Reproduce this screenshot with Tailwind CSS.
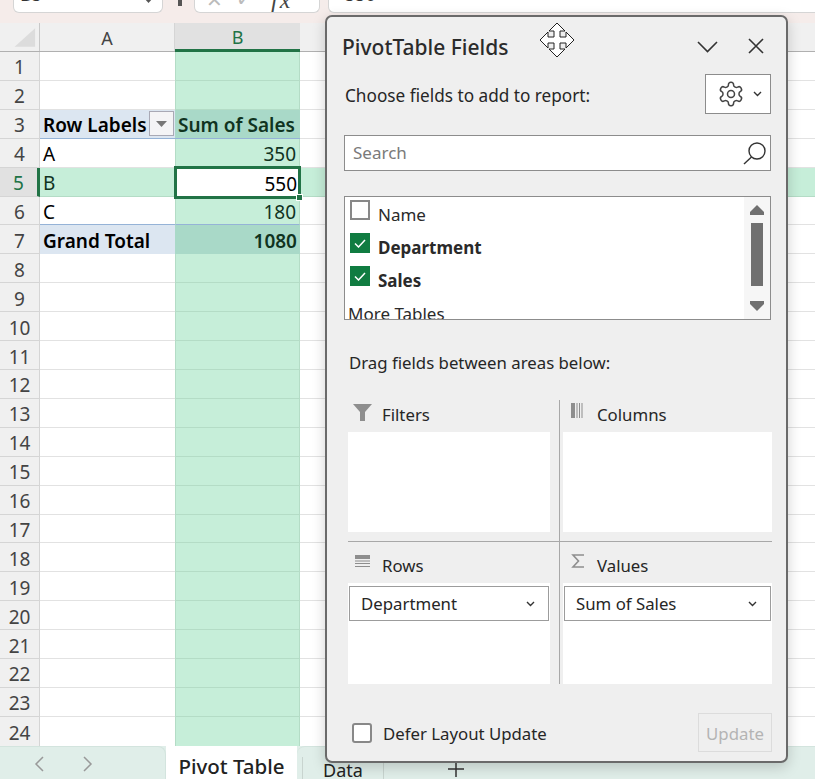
<!DOCTYPE html>
<html><head><meta charset="utf-8"><title>PivotTable Fields</title>
<script src="https://cdn.jsdelivr.net/npm/@tailwindcss/browser@4"></script>
</head>
<body class="m-0">
<div class="relative w-[815px] h-[779px] overflow-hidden bg-white font-['Noto_Sans',sans-serif] text-[#222]">
  <!-- formula bar -->
  <div class="h-[23px] bg-[#f5ecea] flex items-start text-[18px] text-[#333]">
    <div class="ml-[13px] w-[150px] h-[13px] bg-white border border-t-0 border-[#d5d5d5] rounded-b-[6px] overflow-hidden flex justify-between pl-[6px] pr-[9px]"><span class="leading-[20px] mt-[-16px]">B5</span><svg class="mt-[-2px]" width="9" height="5" viewBox="0 0 9 5"><polygon points="0,0 9,0 4.500,5" fill="#555"/></svg></div>
    <div class="ml-[15px] w-[4px] h-[6px] bg-[#555]"></div>
    <div class="ml-[12px] w-[126px] h-[13px] bg-white border border-t-0 border-[#d5d5d5] rounded-b-[6px] overflow-hidden flex items-end gap-[13px] pl-[11px] text-[#bbb] text-[20px]"><span class="leading-[14px] mb-[5px]">✕</span><span class="leading-[14px] mb-[6px]">✓</span><span class="italic font-['Liberation_Serif',serif] text-[#444] text-[24px] tracking-[2px] leading-[14px] ml-[5px] mb-[5px]">fx</span></div>
    <div class="ml-[8px] flex-1 h-[13px] bg-white border border-t-0 border-r-0 border-[#d5d5d5] rounded-bl-[6px] overflow-hidden pl-[16px]"><span class="block leading-[20px] mt-[-16px]">550</span></div>
  </div>
  <!-- column headers -->
  <div class="flex h-[29px] bg-[#f0f0f0] text-[18px] text-[#444] border-b border-[#b0b0b0]">
    <div class="w-10 border-r border-[#c8c8c8] flex items-center justify-center"><svg width="40" height="28" viewBox="0 0 40 28"><polygon points="15,24 36,24 36,5" fill="#dcdcdc"/></svg></div>
    <div class="w-[135px] flex items-center justify-center border-r border-[#d5d5d5] pt-[2px]">A</div>
    <div class="w-[125px] flex items-center justify-center bg-[#e1e1e1] text-[#217346] border-b-[3px] border-[#217346] mb-[-1px] pt-[2px]">B</div>
    <div class="flex-1"></div>
  </div>
  <!-- rows -->
  <div class="text-[19px] leading-none [&>div>div]:pt-[4px]">
    <div class="flex h-[28.92px]"><div class="w-10 bg-[#f0f0f0] border-r border-b border-[#d5d5d5] text-[#444] flex items-center justify-center">1</div><div class="w-[135px] border-b border-[#e2e2e2]"></div><div class="w-[125px] bg-[#c6eed9] border-x border-b border-[#b4dcc6]"></div><div class="flex-1 border-b border-[#e2e2e2]"></div></div>
    <div class="flex h-[28.92px]"><div class="w-10 bg-[#f0f0f0] border-r border-b border-[#d5d5d5] text-[#444] flex items-center justify-center">2</div><div class="w-[135px] border-b border-[#e2e2e2]"></div><div class="w-[125px] bg-[#c6eed9] border-x border-b border-[#b4dcc6]"></div><div class="flex-1 border-b border-[#e2e2e2]"></div></div>
    <div class="flex h-[28.92px]"><div class="w-10 bg-[#f0f0f0] border-r border-b border-[#d5d5d5] text-[#444] flex items-center justify-center">3</div><div class="w-[135px] bg-[#dce6f1] border-b border-[#95b3d7] flex items-center justify-between pl-[3px] pr-px font-semibold text-black"><span>Row Labels</span><span class="w-[25px] h-[25px] mt-[-4px] bg-[#f4f4f6] border border-[#a9a9b5] flex items-center justify-center"><svg width="11" height="6" viewBox="0 0 11 6"><polygon points="0,0 11,0 5.5,6" fill="#777"/></svg></span></div><div class="w-[125px] bg-[#a9d9c8] border-b border-[#95b3d7] flex items-center pl-[3px] font-semibold text-[#10331f] whitespace-nowrap">Sum of Sales</div><div class="flex-1 border-b border-[#e2e2e2]"></div></div>
    <div class="flex h-[28.92px]"><div class="w-10 bg-[#f0f0f0] border-r border-b border-[#d5d5d5] text-[#444] flex items-center justify-center">4</div><div class="w-[135px] border-b border-[#e2e2e2] flex items-center pl-[3px] text-black">A</div><div class="w-[125px] bg-[#c6eed9] border-x border-b border-[#b4dcc6] flex items-center justify-end pr-[3px] text-[#10331f]">350</div><div class="flex-1 border-b border-[#e2e2e2]"></div></div>
    <div class="flex h-[28.92px]"><div class="w-10 bg-[#e1e1e1] border-r-[3px] border-b border-r-[#217346] border-b-[#d5d5d5] text-[#217346] flex items-center justify-center">5</div><div class="w-[135px] bg-[#c6eed9] border-b border-[#b4dcc6] flex items-center pl-[3px] text-[#10331f]">B</div><div class="relative w-[125px] bg-white flex items-center justify-end pr-[3px] text-black">550<span class="absolute -inset-x-px inset-y-[-2px] border-[3px] border-[#217346]"></span><span class="absolute right-[-3px] bottom-[-4px] w-[7px] h-[7px] bg-[#217346] border border-white"></span></div><div class="flex-1 bg-[#c6eed9] border-b border-[#b4dcc6]"></div></div>
    <div class="flex h-[28.92px]"><div class="w-10 bg-[#f0f0f0] border-r border-b border-[#d5d5d5] text-[#444] flex items-center justify-center">6</div><div class="w-[135px] border-b border-[#95b3d7] flex items-center pl-[3px] text-black">C</div><div class="w-[125px] bg-[#c6eed9] border-x border-b border-x-[#b4dcc6] border-b-[#95b3d7] flex items-center justify-end pr-[3px] text-[#10331f]">180</div><div class="flex-1 border-b border-[#e2e2e2]"></div></div>
    <div class="flex h-[28.92px]"><div class="w-10 bg-[#f0f0f0] border-r border-b border-[#d5d5d5] text-[#444] flex items-center justify-center">7</div><div class="w-[135px] bg-[#dce6f1] flex items-center pl-[3px] font-semibold text-black">Grand Total</div><div class="w-[125px] bg-[#a9d9c8] flex items-center justify-end pr-[3px] font-semibold text-[#10331f]">1080</div><div class="flex-1 border-b border-[#e2e2e2]"></div></div>
    <div class="flex h-[28.92px]"><div class="w-10 bg-[#f0f0f0] border-r border-b border-[#d5d5d5] text-[#444] flex items-center justify-center">8</div><div class="w-[135px] border-b border-[#e2e2e2]"></div><div class="w-[125px] bg-[#c6eed9] border-x border-b border-[#b4dcc6]"></div><div class="flex-1 border-b border-[#e2e2e2]"></div></div>
    <div class="flex h-[28.92px]"><div class="w-10 bg-[#f0f0f0] border-r border-b border-[#d5d5d5] text-[#444] flex items-center justify-center">9</div><div class="w-[135px] border-b border-[#e2e2e2]"></div><div class="w-[125px] bg-[#c6eed9] border-x border-b border-[#b4dcc6]"></div><div class="flex-1 border-b border-[#e2e2e2]"></div></div>
    <div class="flex h-[28.92px]"><div class="w-10 bg-[#f0f0f0] border-r border-b border-[#d5d5d5] text-[#444] flex items-center justify-center">10</div><div class="w-[135px] border-b border-[#e2e2e2]"></div><div class="w-[125px] bg-[#c6eed9] border-x border-b border-[#b4dcc6]"></div><div class="flex-1 border-b border-[#e2e2e2]"></div></div>
    <div class="flex h-[28.92px]"><div class="w-10 bg-[#f0f0f0] border-r border-b border-[#d5d5d5] text-[#444] flex items-center justify-center">11</div><div class="w-[135px] border-b border-[#e2e2e2]"></div><div class="w-[125px] bg-[#c6eed9] border-x border-b border-[#b4dcc6]"></div><div class="flex-1 border-b border-[#e2e2e2]"></div></div>
    <div class="flex h-[28.92px]"><div class="w-10 bg-[#f0f0f0] border-r border-b border-[#d5d5d5] text-[#444] flex items-center justify-center">12</div><div class="w-[135px] border-b border-[#e2e2e2]"></div><div class="w-[125px] bg-[#c6eed9] border-x border-b border-[#b4dcc6]"></div><div class="flex-1 border-b border-[#e2e2e2]"></div></div>
    <div class="flex h-[28.92px]"><div class="w-10 bg-[#f0f0f0] border-r border-b border-[#d5d5d5] text-[#444] flex items-center justify-center">13</div><div class="w-[135px] border-b border-[#e2e2e2]"></div><div class="w-[125px] bg-[#c6eed9] border-x border-b border-[#b4dcc6]"></div><div class="flex-1 border-b border-[#e2e2e2]"></div></div>
    <div class="flex h-[28.92px]"><div class="w-10 bg-[#f0f0f0] border-r border-b border-[#d5d5d5] text-[#444] flex items-center justify-center">14</div><div class="w-[135px] border-b border-[#e2e2e2]"></div><div class="w-[125px] bg-[#c6eed9] border-x border-b border-[#b4dcc6]"></div><div class="flex-1 border-b border-[#e2e2e2]"></div></div>
    <div class="flex h-[28.92px]"><div class="w-10 bg-[#f0f0f0] border-r border-b border-[#d5d5d5] text-[#444] flex items-center justify-center">15</div><div class="w-[135px] border-b border-[#e2e2e2]"></div><div class="w-[125px] bg-[#c6eed9] border-x border-b border-[#b4dcc6]"></div><div class="flex-1 border-b border-[#e2e2e2]"></div></div>
    <div class="flex h-[28.92px]"><div class="w-10 bg-[#f0f0f0] border-r border-b border-[#d5d5d5] text-[#444] flex items-center justify-center">16</div><div class="w-[135px] border-b border-[#e2e2e2]"></div><div class="w-[125px] bg-[#c6eed9] border-x border-b border-[#b4dcc6]"></div><div class="flex-1 border-b border-[#e2e2e2]"></div></div>
    <div class="flex h-[28.92px]"><div class="w-10 bg-[#f0f0f0] border-r border-b border-[#d5d5d5] text-[#444] flex items-center justify-center">17</div><div class="w-[135px] border-b border-[#e2e2e2]"></div><div class="w-[125px] bg-[#c6eed9] border-x border-b border-[#b4dcc6]"></div><div class="flex-1 border-b border-[#e2e2e2]"></div></div>
    <div class="flex h-[28.92px]"><div class="w-10 bg-[#f0f0f0] border-r border-b border-[#d5d5d5] text-[#444] flex items-center justify-center">18</div><div class="w-[135px] border-b border-[#e2e2e2]"></div><div class="w-[125px] bg-[#c6eed9] border-x border-b border-[#b4dcc6]"></div><div class="flex-1 border-b border-[#e2e2e2]"></div></div>
    <div class="flex h-[28.92px]"><div class="w-10 bg-[#f0f0f0] border-r border-b border-[#d5d5d5] text-[#444] flex items-center justify-center">19</div><div class="w-[135px] border-b border-[#e2e2e2]"></div><div class="w-[125px] bg-[#c6eed9] border-x border-b border-[#b4dcc6]"></div><div class="flex-1 border-b border-[#e2e2e2]"></div></div>
    <div class="flex h-[28.92px]"><div class="w-10 bg-[#f0f0f0] border-r border-b border-[#d5d5d5] text-[#444] flex items-center justify-center">20</div><div class="w-[135px] border-b border-[#e2e2e2]"></div><div class="w-[125px] bg-[#c6eed9] border-x border-b border-[#b4dcc6]"></div><div class="flex-1 border-b border-[#e2e2e2]"></div></div>
    <div class="flex h-[28.92px]"><div class="w-10 bg-[#f0f0f0] border-r border-b border-[#d5d5d5] text-[#444] flex items-center justify-center">21</div><div class="w-[135px] border-b border-[#e2e2e2]"></div><div class="w-[125px] bg-[#c6eed9] border-x border-b border-[#b4dcc6]"></div><div class="flex-1 border-b border-[#e2e2e2]"></div></div>
    <div class="flex h-[28.92px]"><div class="w-10 bg-[#f0f0f0] border-r border-b border-[#d5d5d5] text-[#444] flex items-center justify-center">22</div><div class="w-[135px] border-b border-[#e2e2e2]"></div><div class="w-[125px] bg-[#c6eed9] border-x border-b border-[#b4dcc6]"></div><div class="flex-1 border-b border-[#e2e2e2]"></div></div>
    <div class="flex h-[28.92px]"><div class="w-10 bg-[#f0f0f0] border-r border-b border-[#d5d5d5] text-[#444] flex items-center justify-center">23</div><div class="w-[135px] border-b border-[#e2e2e2]"></div><div class="w-[125px] bg-[#c6eed9] border-x border-b border-[#b4dcc6]"></div><div class="flex-1 border-b border-[#e2e2e2]"></div></div>
    <div class="flex h-[28.92px]"><div class="w-10 bg-[#f0f0f0] border-r border-[#d5d5d5] text-[#444] flex items-center justify-center">24</div><div class="w-[135px]"></div><div class="w-[125px] bg-[#c6eed9] border-x border-[#b4dcc6]"></div><div class="flex-1"></div></div>
  </div>
  <!-- sheet tabs -->
  <div class="flex h-[33px] bg-[#e0eee9] overflow-hidden">
    <div class="w-[166px] flex items-center gap-[37px] pl-[33px] pt-[3px] border-t border-r border-[#d3e4de] rounded-tr-[8px]">
      <svg width="12" height="16" viewBox="0 0 12 16"><path d="M10 1 3 8l7 7" fill="none" stroke="#999" stroke-width="1.5"/></svg>
      <svg width="12" height="16" viewBox="0 0 12 16"><path d="M2 1l7 7-7 7" fill="none" stroke="#999" stroke-width="1.5"/></svg>
    </div>
    <div class="w-[131px] bg-white text-center text-[20.5px] font-medium leading-[40px] text-[#222]">Pivot Table</div>
    <div class="flex-1 flex border-t border-[#d3e4de] rounded-tl-[8px]">
      <div class="ml-[5px] mt-[10px] w-px h-[22px] bg-[#c8d4cf]"></div>
      <div class="ml-[20px] text-[18px] leading-[46px] w-[61px] border-r border-[#c8d4cf]">Data</div>
      <svg class="ml-[63px] mt-[13px]" width="18" height="18" viewBox="0 0 18 18"><path d="M9 1v16M1 9h16" stroke="#333" stroke-width="1.5"/></svg>
    </div>
  </div>

  <!-- floating task pane -->
  <div class="absolute left-[325px] top-[15px] w-[463px] h-[748px] bg-[#efefef] border-2 border-[#6a6a6a] rounded-[7px] shadow-[0_4px_14px_rgba(0,0,0,0.18)]">
    <div class="h-[57px] pt-[14px] pl-[15px] flex items-start">
      <span class="text-[21px] leading-[32px] font-medium text-[#2b2b2b]">PivotTable Fields</span>
      <svg class="ml-[189px] mt-[10px]" width="21" height="12" viewBox="0 0 21 12"><path d="M1 1l9.5 9.5L20 1" fill="none" stroke="#333" stroke-width="1.6"/></svg>
      <svg class="ml-[30px] mt-[7px]" width="16" height="16" viewBox="0 0 16 16"><path d="M1 1l14 14M15 1 1 15" stroke="#333" stroke-width="1.6"/></svg>
    </div>
    <div class="h-10 pl-[18px] pr-[15px] flex items-center justify-between">
      <span class="text-[17.2px] text-[#262626] pt-[4px]">Choose fields to add to report:</span>
      <div class="w-[66px] h-10 bg-white border border-[#8c8c8c] flex items-center pl-[11px] gap-[8px]">
        <svg width="28" height="28" viewBox="0 0 24 24" fill="none" stroke="#444" stroke-width="1.3"><path d="M12.22 2h-.44a2 2 0 0 0-2 2v.18a2 2 0 0 1-1 1.73l-.43.25a2 2 0 0 1-2 0l-.15-.08a2 2 0 0 0-2.73.73l-.22.38a2 2 0 0 0 .73 2.73l.15.1a2 2 0 0 1 1 1.72v.51a2 2 0 0 1-1 1.74l-.15.09a2 2 0 0 0-.73 2.73l.22.38a2 2 0 0 0 2.73.73l.15-.08a2 2 0 0 1 2 0l.43.25a2 2 0 0 1 1 1.73V20a2 2 0 0 0 2 2h.44a2 2 0 0 0 2-2v-.18a2 2 0 0 1 1-1.73l.43-.25a2 2 0 0 1 2 0l.15.08a2 2 0 0 0 2.73-.73l.22-.39a2 2 0 0 0-.73-2.73l-.15-.08a2 2 0 0 1-1-1.74v-.5a2 2 0 0 1 1-1.74l.15-.09a2 2 0 0 0 .73-2.73l-.22-.38a2 2 0 0 0-2.73-.73l-.15.08a2 2 0 0 1-2 0l-.43-.25a2 2 0 0 1-1-1.73V4a2 2 0 0 0-2-2z"/><circle cx="12" cy="12" r="3"/></svg>
        <svg width="9" height="6" viewBox="0 0 9 6"><path d="M1 1l3.5 3.5L8 1" fill="none" stroke="#333" stroke-width="1.4"/></svg>
      </div>
    </div>
    <div class="mt-[21px] ml-[17px] w-[427px] h-9 bg-white border border-[#8c8c8c] flex items-center justify-between pl-[8px] pr-[3px]">
      <span class="text-[17px] text-[#7a7a7a]">Search</span>
      <svg width="25" height="25" viewBox="0 0 25 25" fill="none" stroke="#333" stroke-width="1.4"><circle cx="15" cy="10" r="8"/><path d="M9.5 16 2 23"/></svg>
    </div>
    <div class="mt-[25px] ml-[17px] w-[427px] h-[124px] bg-white border border-[#8c8c8c] flex overflow-hidden">
      <div class="flex-1 overflow-hidden relative text-[17px]">
        <div class="flex items-start h-[33px] pt-[3px] pl-[5px]"><span class="w-5 h-5 border-2 border-[#888] bg-white"></span><span class="ml-[8px] mt-[3px] leading-[24px] text-[#2a2a2a]">Name</span></div>
        <div class="flex items-start h-[33px] pt-[3px] pl-[5px]"><span class="w-5 h-5 bg-[#107c41] flex items-center justify-center"><svg width="12" height="9" viewBox="0 0 12 9"><path d="M1 4.5 4.5 8 11 1" fill="none" stroke="#fff" stroke-width="1.5"/></svg></span><span class="ml-[8px] mt-[3px] leading-[24px] font-bold text-[#2a2a2a]">Department</span></div>
        <div class="flex items-start h-[33px] pt-[3px] pl-[5px]"><span class="w-5 h-5 bg-[#107c41] flex items-center justify-center"><svg width="12" height="9" viewBox="0 0 12 9"><path d="M1 4.5 4.5 8 11 1" fill="none" stroke="#fff" stroke-width="1.5"/></svg></span><span class="ml-[8px] mt-[3px] leading-[24px] font-bold text-[#2a2a2a]">Sales</span></div>
        <div class="pl-[3px] pt-[6px] leading-[24px] text-[#2a2a2a]">More Tables</div>
      </div>
      <div class="w-[26px] bg-[#f6f6f6] flex flex-col items-center pt-[8px]">
        <svg width="14" height="10" viewBox="0 0 14 10"><polygon points="7,0 14,7 14,10 0,10 0,7" fill="#707070"/></svg>
        <div class="w-3 h-[63px] bg-[#707070] mt-[8px]"></div>
        <svg class="mt-[15px]" width="14" height="10" viewBox="0 0 14 10"><polygon points="0,0 14,0 14,3 7,10 0,3" fill="#707070"/></svg>
      </div>
    </div>
    <div class="mt-[28px] ml-[22px] h-[30px] flex items-center text-[16.8px] text-[#262626]">Drag fields between areas below:</div>
    <div class="mt-[22px] ml-[21px] w-[424px] text-[16.8px] text-[#262626]">
      <div class="flex h-[142px] border-b border-[#a8a8a8]">
        <div class="w-[212px] border-r border-[#a8a8a8] pr-[9px]">
          <div class="h-8 flex items-start pl-[5px] pt-[3px]">
            <svg class="w-[19px] mt-px" height="18" viewBox="0 0 19 18"><polygon points="0,0 19,0 12,8 12,17 7,17 7,8" fill="#8e8e8e"/></svg>
            <span class="ml-[10px] mt-px leading-[22px]">Filters</span>
          </div>
          <div class="h-[100px] bg-white"></div>
        </div>
        <div class="flex-1 pl-[3px]">
          <div class="h-8 flex items-start pl-[8px] pt-[3px]">
            <svg class="w-[13px]" height="16" viewBox="0 0 13 16" fill="#8e8e8e"><rect width="4" height="15"/><rect x="5.5" width="1" height="15"/><rect x="8" width="1" height="15"/><rect x="10.5" width="1" height="15"/></svg>
            <span class="ml-[13px] mt-px leading-[22px]">Columns</span>
          </div>
          <div class="h-[100px] bg-white"></div>
        </div>
      </div>
      <div class="flex h-[142px]">
        <div class="w-[212px] border-r border-[#a8a8a8] pr-[9px]">
          <div class="h-[41px] flex items-start pl-[7px] pt-[12px]">
            <svg class="w-[15px] mt-px" height="13" viewBox="0 0 15 13" fill="#8e8e8e"><rect width="15" height="4"/><rect y="5.5" width="15" height="1"/><rect y="8" width="15" height="1"/><rect y="11" width="15" height="1"/></svg>
            <span class="ml-[12px] mt-px leading-[22px]">Rows</span>
          </div>
          <div class="h-[101px] bg-white pt-[3px] px-px">
            <div class="h-[35px] border border-[#9c9c9c] bg-white flex items-center justify-between pl-[11px] pr-[13px]"><span class="pt-px">Department</span><svg width="9" height="6" viewBox="0 0 9 6"><path d="M1 1l3.5 3.5L8 1" fill="none" stroke="#333" stroke-width="1.4"/></svg></div>
          </div>
        </div>
        <div class="flex-1 pl-[3px]">
          <div class="h-[41px] flex items-start pl-[8px] pt-[12px]">
            <svg class="w-[14px]" height="14" viewBox="0 0 14 14"><path d="M13 1H2l5.500 6L2 13h11" fill="none" stroke="#8e8e8e" stroke-width="1.6"/></svg>
            <span class="ml-[12px] mt-px leading-[22px]">Values</span>
          </div>
          <div class="h-[101px] bg-white pt-[3px] px-px">
            <div class="h-[35px] border border-[#9c9c9c] bg-white flex items-center justify-between pl-[11px] pr-[13px]"><span class="pt-px">Sum of Sales</span><svg width="9" height="6" viewBox="0 0 9 6"><path d="M1 1l3.500 3.500L8 1" fill="none" stroke="#333" stroke-width="1.4"/></svg></div>
          </div>
        </div>
      </div>
    </div>
    <div class="mt-[29px] ml-[25px] mr-[14px] h-[39px] flex items-center justify-between text-[16.8px]">
      <div class="flex items-center"><span class="w-5 h-5 bg-white border-2 border-[#888] rounded-[3px]"></span><span class="ml-[11px] pt-[2px] text-[#262626]">Defer Layout Update</span></div>
      <div class="w-[74px] h-[39px] border border-[#dcdcdc] flex items-center justify-center pt-[2px] text-[#b4b4b4]">Update</div>
    </div>
  </div>

  <!-- move cursor -->
  <svg class="absolute left-[539px] top-[22px]" width="36" height="36" viewBox="0 0 36 36"><path d="M18 1l8 8h-5v6h6v-5l8 8-8 8v-5h-6v6h5l-8 8-8-8h5v-6H9v5l-8-8 8-8v5h6V9h-5z" fill="#fff" stroke="#222" stroke-width="1"/></svg>
</div>
</body></html>
